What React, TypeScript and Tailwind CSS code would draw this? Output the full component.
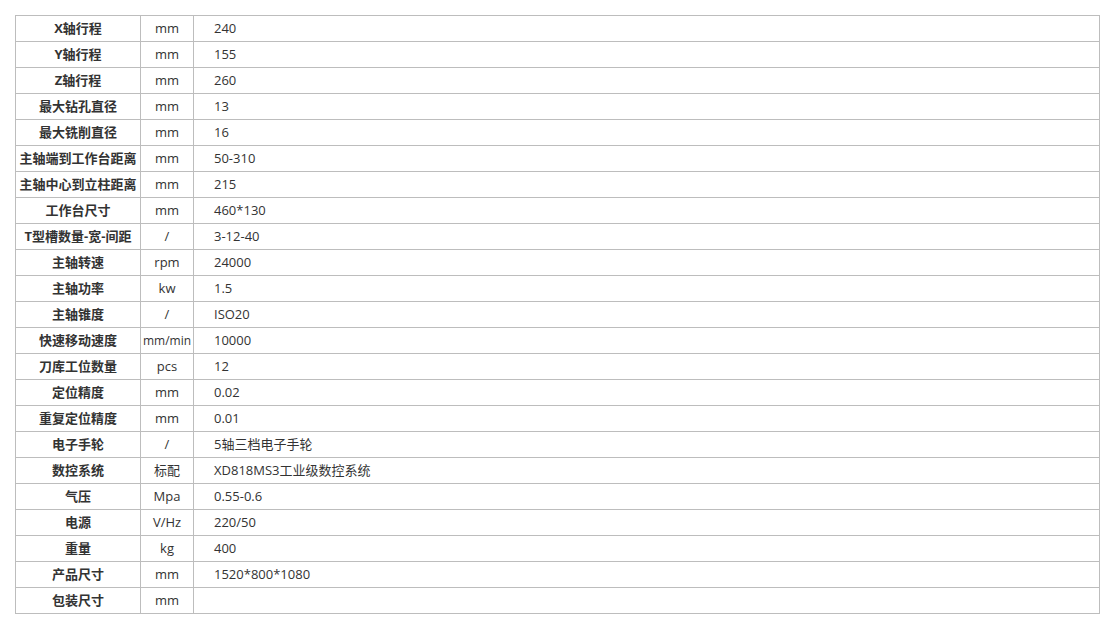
const rows: [string, string, string][] = [
  ['X轴行程', 'mm', '240'],
  ['Y轴行程', 'mm', '155'],
  ['Z轴行程', 'mm', '260'],
  ['最大钻孔直径', 'mm', '13'],
  ['最大铣削直径', 'mm', '16'],
  ['主轴端到工作台距离', 'mm', '50-310'],
  ['主轴中心到立柱距离', 'mm', '215'],
  ['工作台尺寸', 'mm', '460*130'],
  ['T型槽数量-宽-间距', '/', '3-12-40'],
  ['主轴转速', 'rpm', '24000'],
  ['主轴功率', 'kw', '1.5'],
  ['主轴锥度', '/', 'ISO20'],
  ['快速移动速度', 'mm/min', '10000'],
  ['刀库工位数量', 'pcs', '12'],
  ['定位精度', 'mm', '0.02'],
  ['重复定位精度', 'mm', '0.01'],
  ['电子手轮', '/', '5轴三档电子手轮'],
  ['数控系统', '标配', 'XD818MS3工业级数控系统'],
  ['气压', 'Mpa', '0.55-0.6'],
  ['电源', 'V/Hz', '220/50'],
  ['重量', 'kg', '400'],
  ['产品尺寸', 'mm', '1520*800*1080'],
  ['包装尺寸', 'mm', ''],
];

export default function App() {
  return (
    <div className="min-h-[629px] bg-white pt-[15px] pl-[15px] font-['Open_Sans','Noto_Sans_CJK_SC',sans-serif] text-[13px] text-[#333]">
      <table className="w-[1085px] table-fixed border-collapse border border-[#bdbdbd]">
        <colgroup>
          <col className="w-[125px]" />
          <col className="w-[53px]" />
          <col />
        </colgroup>
        <tbody>
          {rows.map(([name, unit, value]) => (
            <tr key={name} className="h-[26px]">
              <td className="border border-[#bdbdbd] p-0 text-center font-bold whitespace-nowrap">{name}</td>
              <td className={`border border-[#bdbdbd] p-0 text-center whitespace-nowrap ${unit === 'mm/min' ? 'text-[12px]' : ''}`}>{unit}</td>
              <td className="border border-[#bdbdbd] py-0 pl-[20px]">{value}</td>
            </tr>
          ))}
        </tbody>
      </table>
    </div>
  );
}
